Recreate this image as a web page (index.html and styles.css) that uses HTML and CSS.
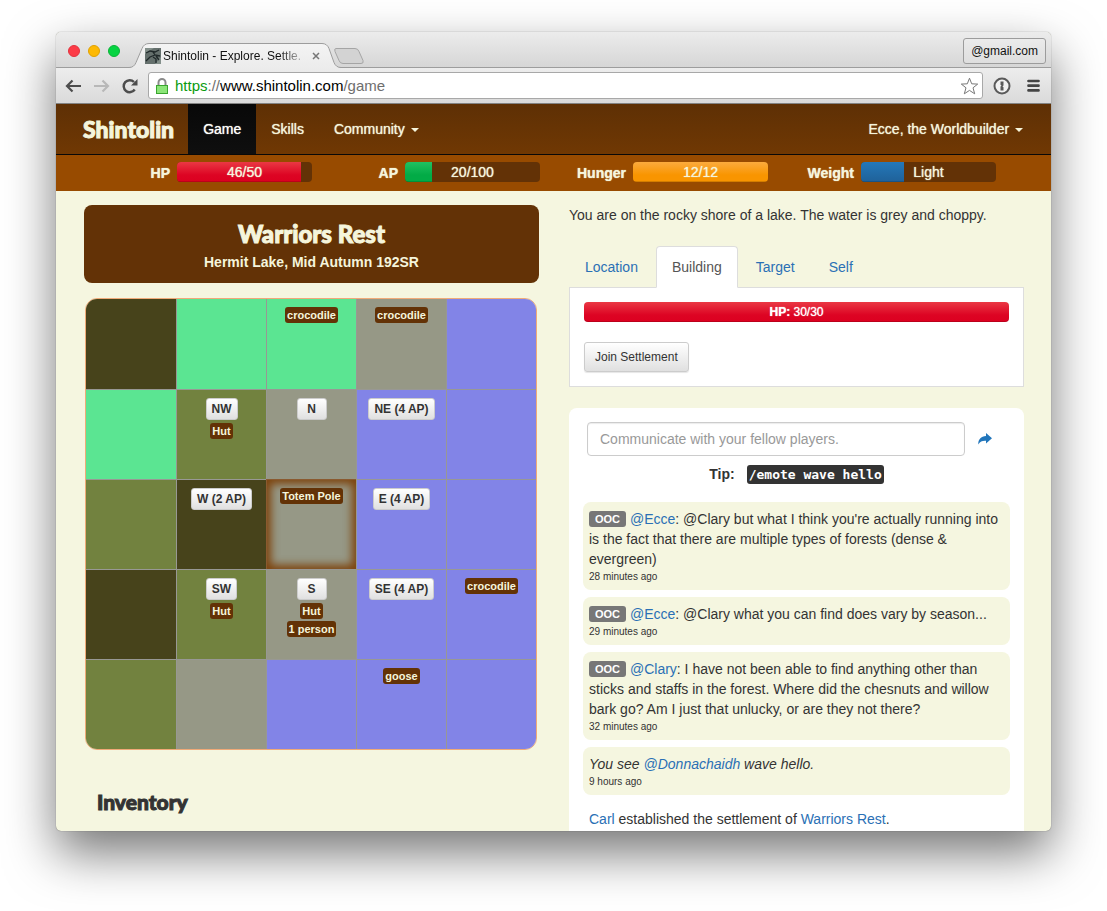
FILE: index.html
```html
<!DOCTYPE html>
<html lang="en">
<head>
<meta charset="utf-8">
<meta name="viewport" content="width=device-width, initial-scale=1">
<title>Shintolin - Explore. Settle.</title>
<link rel="stylesheet" href="styles.css">
</head>
<body>
<div class="window">
  <header class="chrome">
    <div class="titlebar">
      <div class="lights">
        <button class="light light-close" aria-label="Close window"></button>
        <button class="light light-min" aria-label="Minimise window"></button>
        <button class="light light-max" aria-label="Zoom window"></button>
      </div>
      <div class="tab">
        <svg class="tab-shape" viewBox="0 0 244 27" aria-hidden="true">
          <defs><linearGradient id="tabfill" x1="0" y1="0" x2="0" y2="1"><stop offset="0" stop-color="#f4f4f4"/><stop offset="1" stop-color="#ebebeb"/></linearGradient></defs>
          <path d="M207 5.500h19q3 0 4 3l4 9q1 3-2 3h-18q-3 0-4-3l-4-9q-1-3 1-3z" fill="#d3d3d3" stroke="#a5a5a5"/>
          <path d="M0 24.500q5 0 7-5l6-14q2-5 7-5h173q5 0 7 5l5 14q2 5 7 5v2.500H0z" fill="url(#tabfill)"/>
          <path d="M0 24.500q5 0 7-5l6-14q2-5 7-5h173q5 0 7 5l5 14q2 5 7 5" fill="none" stroke="#9d9d9d"/>
        </svg>
        <div class="tab-body">
          <svg class="favicon" viewBox="0 0 16 16" aria-hidden="true">
            <rect width="16" height="16" fill="#65706d"/>
            <path d="M0 0h9L0 6zM10 16l6-7v7z" fill="#84908b"/>
            <path d="M1 5l4-2 5 1 4-2M8 4l2 3 5 1M10 7L5 9l-4 4M8 9l3 2v4M11 8l3 4" fill="none" stroke="#20292a" stroke-width="1.300"/>
          </svg>
          <span class="tab-title">Shintolin - Explore. Settle.</span>
          <button class="tab-close" aria-label="Close tab"><svg viewBox="0 0 8 8" width="8" height="8"><path d="M1 1l6 6M7 1L1 7" stroke="#777" stroke-width="1.500"/></svg></button>
        </div>
      </div>
      <button class="profile">@gmail.com</button>
    </div>
    <div class="toolbar">
      <button class="tool" aria-label="Back"><svg viewBox="0 0 18 16" width="18" height="16"><path d="M8.500 2.500L3 8l5.500 5.500M3.500 8H17" fill="none" stroke="#4d4d4d" stroke-width="2.200"/></svg></button>
      <button class="tool" aria-label="Forward"><svg viewBox="0 0 18 16" width="18" height="16"><path d="M10.500 2.500L16 8l-5.500 5.500M15.500 8H2" fill="none" stroke="#b8b8b8" stroke-width="2.200"/></svg></button>
      <button class="tool" aria-label="Reload"><svg viewBox="0 0 18 16" width="18" height="16"><path d="M14.700 11.500A6 6 0 1 1 14 4" fill="none" stroke="#4d4d4d" stroke-width="2.500"/><path d="M17.500 1v6.500H11z" fill="#4d4d4d"/></svg></button>
      <div class="omnibox">
        <svg class="lock" viewBox="0 0 12 16" width="12" height="16" aria-hidden="true"><path d="M2.500 8V4.500a3.500 3.500 0 0 1 7 0V8" fill="none" stroke="#8b8b8b" stroke-width="2"/><rect x=".5" y="7.500" width="11" height="8" fill="#8be578" stroke="#3aa52f"/></svg>
        <div class="url" role="textbox" aria-label="Address" tabindex="0"><span class="url-scheme">https</span><span class="url-dim">://</span>www.shintolin.com<span class="url-dim">/game</span></div>
        <button class="star" aria-label="Bookmark this page"><svg viewBox="0 0 19 18" width="19" height="18"><path d="M9.500 1.200l2.200 5.600 6 .3-4.700 3.700 1.700 6-5.200-3.400-5.200 3.400 1.700-6L1.300 7.100l6-.3z" fill="#fff" stroke="#777" stroke-linejoin="round"/></svg></button>
      </div>
      <button class="tool tool-key" aria-label="Password manager"><svg viewBox="0 0 18 18" width="18" height="18"><circle cx="9" cy="9" r="7.500" fill="#f2f2f2" stroke="#5a5a5a" stroke-width="2"/><path d="M7.500 4.500h3v4l-1 .8 1 1v3.200h-3v-4l1-.8-1-1z" fill="#5a5a5a"/></svg></button>
      <button class="tool tool-menu" aria-label="Menu"><svg viewBox="0 0 13 13" width="13" height="13"><path d="M1.500 2h10M1.500 6.700h10M1.500 11.400h10" stroke="#444" stroke-width="2.700" stroke-linecap="round"/></svg></button>
    </div>
  </header>

  <nav class="navbar">
    <a class="brand" href="#">Shintolin</a>
    <a class="nav-link nav-active" href="#">Game</a>
    <a class="nav-link" href="#">Skills</a>
    <a class="nav-link" href="#">Community <span class="caret"></span></a>
    <a class="nav-link nav-user" href="#">Ecce, the Worldbuilder <span class="caret"></span></a>
  </nav>

  <section class="stats" aria-label="Character status">
    <div class="stat"><span class="stat-name">HP</span><div class="bar"><div class="fill fill-red" style="width:92%"></div><span class="bar-text">46/50</span></div></div>
    <div class="stat"><span class="stat-name">AP</span><div class="bar"><div class="fill fill-green" style="width:20%"></div><span class="bar-text">20/100</span></div></div>
    <div class="stat"><span class="stat-name">Hunger</span><div class="bar"><div class="fill fill-orange" style="width:100%"></div><span class="bar-text">12/12</span></div></div>
    <div class="stat"><span class="stat-name">Weight</span><div class="bar"><div class="fill fill-blue" style="width:32%"></div><span class="bar-text">Light</span></div></div>
  </section>

  <main class="page">
    <div class="column">
      <div class="place">
        <h1 class="place-name">Warriors Rest</h1>
        <div class="place-info">Hermit Lake, Mid Autumn 192SR</div>
      </div>
      <div class="map">
        <div class="cell dense"></div>
        <div class="cell grass"></div>
        <div class="cell grass"><span class="tag">crocodile</span></div>
        <div class="cell rock"><span class="tag">crocodile</span></div>
        <div class="cell water"></div>

        <div class="cell grass"></div>
        <div class="cell wood"><button class="move">NW</button><span class="tag">Hut</span></div>
        <div class="cell rock"><button class="move">N</button></div>
        <div class="cell water"><button class="move">NE (4 AP)</button></div>
        <div class="cell water"></div>

        <div class="cell wood"></div>
        <div class="cell dense"><button class="move">W (2 AP)</button></div>
        <div class="cell rock here"><span class="tag">Totem Pole</span></div>
        <div class="cell water"><button class="move">E (4 AP)</button></div>
        <div class="cell water"></div>

        <div class="cell dense"></div>
        <div class="cell wood"><button class="move">SW</button><span class="tag">Hut</span></div>
        <div class="cell rock"><button class="move">S</button><span class="tag">Hut</span><span class="tag">1 person</span></div>
        <div class="cell water"><button class="move">SE (4 AP)</button></div>
        <div class="cell water"><span class="tag">crocodile</span></div>

        <div class="cell wood"></div>
        <div class="cell rock"></div>
        <div class="cell water"></div>
        <div class="cell water"><span class="tag">goose</span></div>
        <div class="cell water"></div>
      </div>
      <h2 class="inventory">Inventory</h2>
    </div>

    <div class="column">
      <p class="description">You are on the rocky shore of a lake. The water is grey and choppy.</p>
      <div class="tabs">
        <a class="tab-link" href="#">Location</a>
        <a class="tab-link tab-active" href="#">Building</a>
        <a class="tab-link" href="#">Target</a>
        <a class="tab-link" href="#">Self</a>
      </div>
      <div class="panel">
        <div class="fill fill-red building-hp"><span><b>HP:</b> 30/30</span></div>
        <button class="join">Join Settlement</button>
      </div>
      <div class="chat">
        <form class="talk">
          <input class="talk-input" type="text" placeholder="Communicate with your fellow players." aria-label="Message">
          <button class="send" type="button" aria-label="Send"><svg viewBox="0 0 14 12" width="14" height="12"><path d="M8 0l6 5.300-6 5.300V7.800C4.500 7.600 2 8.500.3 11.500 0 6.500 3 3.300 8 3z" fill="#2276bb"/></svg></button>
        </form>
        <div class="tip"><b>Tip:</b><kbd class="command">/emote wave hello</kbd></div>
        <div class="messages">
          <div class="message"><span class="ooc">OOC</span> <a href="#">@Ecce</a>: @Clary but what I think you're actually running into is the fact that there are multiple types of forests (dense &amp; evergreen)<small class="when">28 minutes ago</small></div>
          <div class="message"><span class="ooc">OOC</span> <a href="#">@Ecce</a>: @Clary what you can find does vary by season...<small class="when">29 minutes ago</small></div>
          <div class="message"><span class="ooc">OOC</span> <a href="#">@Clary</a>: I have not been able to find anything other than sticks and staffs in the forest. Where did the chesnuts and willow bark go? Am I just that unlucky, or are they not there?<small class="when">32 minutes ago</small></div>
          <div class="message"><em>You see <a href="#">@Donnachaidh</a> wave hello.</em><small class="when">9 hours ago</small></div>
          <div class="message message-plain"><a href="#">Carl</a> established the settlement of <a href="#">Warriors Rest</a>.</div>
        </div>
      </div>
    </div>
  </main>
</div>
</body>
</html>
```
FILE: styles.css
```css
* { box-sizing: border-box; }

body {
  margin: 0;
  padding: 32px 56px 80px;
  height: 100vh;
  overflow: hidden;
  background: #fff;
  color: #333;
  font: 14px/20px "Liberation Sans", Arial, sans-serif;
}

a { color: #2a70b5; text-decoration: none; }
button { font: inherit; margin: 0; padding: 0; border: 0; background: none; color: inherit; }
svg { display: block; }
h1, h2, p { margin: 0; }

.window {
  display: flex;
  flex-direction: column;
  height: 100%;
  overflow: hidden;
  border-radius: 5px;
  background: #f5f6e0;
  box-shadow: 0 22px 50px rgba(0, 0, 0, .54), 0 0 1px rgba(0, 0, 0, .6);
}

/* Browser frame */
.chrome { flex: none; color: #111; }
.titlebar {
  display: flex;
  height: 36px;
  padding: 0 5px 0 12px;
  border-bottom: 1px solid #9d9d9d;
  background: linear-gradient(#ececec, #d6d6d6);
}
.lights { display: flex; align-items: center; gap: 8px; height: 38px; }
.light { width: 12px; height: 12px; border-radius: 50%; }
.light-close { background: #fc3b47; border: 1px solid #e2323e; }
.light-min { background: #fdb904; border: 1px solid #e0a100; }
.light-max { background: #06d442; border: 1px solid #0bb338; }
.tab { display: grid; width: 244px; height: 27px; margin: 11px auto 0 9px; }
.tab-shape, .tab-body { grid-area: 1 / 1; }
.tab-shape { width: 244px; height: 27px; }
.tab-body { display: flex; align-items: center; padding: 0 49px 0 16px; height: 26px; }
.favicon { flex: none; width: 16px; height: 16px; margin-right: 2px; }
.tab-title {
  flex: 1;
  min-width: 0;
  overflow: hidden;
  white-space: nowrap;
  font-size: 12px;
  line-height: 16px;
  -webkit-mask-image: linear-gradient(90deg, #000 80%, transparent);
  mask-image: linear-gradient(90deg, #000 80%, transparent);
}
.tab-close { flex: none; padding: 4px; }
.profile {
  height: 26px;
  margin-top: 6px;
  padding: 0 7px;
  border: 1px solid #9c9c9c;
  border-radius: 3px;
  background: linear-gradient(#ebebeb, #dedede);
  font-size: 12px;
}
.toolbar {
  display: flex;
  align-items: center;
  height: 36px;
  padding: 0 11px 0 8px;
  border-bottom: 1px solid #838383;
  background: linear-gradient(#ededed, #dadada);
}
.tool { flex: none; margin-right: 10px; }
.omnibox {
  display: flex;
  flex: 1;
  align-items: center;
  height: 27px;
  padding: 0 3px 0 7px;
  border: 1px solid #a8a8a8;
  border-radius: 3px;
  background: #fff;
}
.url { flex: 1; margin-left: 7px; font-size: 15px; color: #000; }
.url-scheme { color: #0a9b10; }
.url-dim { color: #6e6e6e; }
.tool-key { margin: 0 16px 0 10px; }
.tool-menu { margin-right: 0; }

/* Site navigation */
.navbar {
  display: flex;
  flex: none;
  height: 51px;
  padding: 0 13px 0 12px;
  border-bottom: 1px solid #080808;
  background: linear-gradient(#5e3005, #703803);
}
.brand, .place-name, .inventory { font-family: Lato, "Open Sans", sans-serif; font-weight: 900; }
.brand {
  padding: 0 14px 0 15px;
  font-size: 23px;
  line-height: 50px;
  color: #f5f5dc;
  -webkit-text-stroke: 1px #f5f5dc;
}
.nav-link {
  padding: 0 15px;
  line-height: 50px;
  color: #f5f5dc;
  text-shadow: 0 0 1px #f5f5dc;
}
.nav-active { background: linear-gradient(#080808, #0f0f0f); color: #fff; }
.nav-user { margin-left: auto; }
.caret {
  display: inline-block;
  margin-left: 2px;
  vertical-align: middle;
  border-top: 4px solid;
  border-left: 4px solid transparent;
  border-right: 4px solid transparent;
}

/* Character status */
.stats {
  display: grid;
  flex: none;
  grid-template-columns: repeat(4, 1fr);
  height: 36px;
  padding: 0 55px 0 28px;
  background: #984b00;
  color: #f5f5dc;
}
.stat { display: grid; grid-template-columns: 86fr 135fr; column-gap: 7px; padding-top: 7px; }
.stat-name {
  text-align: right;
  font-weight: bold;
  line-height: 22px;
  text-shadow: 0 0 1px #f5f5dc;
}
.bar {
  display: grid;
  height: 20px;
  overflow: hidden;
  border-radius: 4px;
  background: #633206;
  text-shadow: 0 0 1px #f5f5dc;
}
.bar .fill, .bar-text { grid-area: 1 / 1; }
.bar-text { text-align: center; }
.fill { text-align: center; box-shadow: inset 0 -1px 0 rgba(0, 0, 0, .15); }
.fill-red { background: linear-gradient(#ea3844, #dd0423 65%, #dc0020); }
.fill-green { background: linear-gradient(#21c062, #02ab46 65%); }
.fill-orange { background: linear-gradient(#fbab3e, #f99500 65%); }
.fill-blue { background: linear-gradient(#2478b9, #1f6199); }

/* Page body */
.page {
  display: grid;
  flex: 1;
  grid-template-columns: 1fr 1fr;
  column-gap: 30px;
  align-items: start;
  min-height: 0;
  overflow: hidden;
  padding: 14px 27px 0 28px;
}
.column { min-width: 0; }
.place {
  padding: 12px 10px 10px;
  border-radius: 8px;
  background: #633206;
  color: #f5f5dc;
  text-align: center;
}
.place-name { font-size: 24px; line-height: 34px; -webkit-text-stroke: 1px #f5f5dc; }
.place-info { line-height: 22px; font-weight: bold; }
.map {
  display: grid;
  grid-template-columns: repeat(5, 1fr);
  grid-auto-rows: 1fr;
  max-width: 452px;
  aspect-ratio: 1;
  margin: 15px 0 0 1px;
  overflow: hidden;
  border: 1px solid #f0aa78;
  border-radius: 12px;
}
.cell {
  display: flex;
  flex-direction: column;
  align-items: center;
  gap: 2px;
  min-width: 0;
  padding-top: 8px;
  border: solid #989894;
  border-width: 1px 0 0 1px;
}
.cell:nth-child(5n + 1) { border-left-width: 0; }
.cell:nth-child(-n + 5) { border-top-width: 0; }
.dense { background: #47431b; }
.grass { background: #5be592; }
.wood { background: #72823f; }
.rock { background: #969886; }
.water { background: #8284e7; }
.here { border-color: #8a5a30; box-shadow: inset 0 0 8px 4px #7d430c; }
.move {
  min-width: 30px;
  height: 22px;
  margin-bottom: 1px;
  padding: 0 5px;
  border: 1px solid #ccc;
  border-radius: 3px;
  background: linear-gradient(#fff, #e0e0e0);
  color: #333;
  font-size: 12px;
  font-weight: bold;
  line-height: 20px;
}
.tag {
  height: 16px;
  padding: 0 2px;
  border-radius: 3px;
  background: #633206;
  color: #f5f5dc;
  font-size: 11px;
  font-weight: bold;
  line-height: 16px;
}
.inventory { margin: 37px 0 0 13px; font-size: 21px; line-height: 30px; -webkit-text-stroke: 1px #333; }

.description { margin-bottom: 21px; }
.tabs { display: flex; gap: 2px; margin-bottom: -1px; }
.tab-link {
  padding: 10px 15px;
  border: 1px solid transparent;
  border-radius: 4px 4px 0 0;
}
.tab-active { border-color: #ddd; border-bottom-color: #fff; background: #fff; color: #555; z-index: 1; }
.panel { padding: 14px; border: 1px solid #ddd; background: #fff; }
.building-hp {
  margin-bottom: 20px;
  border-radius: 4px;
  color: #fff;
  font-size: 12px;
  text-shadow: 0 0 1px #fff;
}
.join {
  display: block;
  height: 30px;
  padding: 0 10px;
  border: 1px solid #ccc;
  border-radius: 3px;
  background: linear-gradient(#fff, #e0e0e0);
  box-shadow: 0 1px 1px rgba(0, 0, 0, .1);
  font-size: 12px;
}

.chat { margin-top: 21px; padding: 14px; border-radius: 8px; background: #fff; }
.talk { display: flex; align-items: center; padding: 0 18px 0 4px; }
.talk-input {
  flex: 1;
  min-width: 0;
  height: 34px;
  padding: 0 12px;
  border: 1px solid #ccc;
  border-radius: 4px;
  box-shadow: inset 0 1px 1px rgba(0, 0, 0, .08);
  font: inherit;
}
.talk-input::placeholder { color: #999; opacity: 1; }
.send { margin-left: 13px; }
.tip { display: flex; justify-content: center; align-items: center; gap: 12px; margin-top: 8px; }
.command {
  padding: 0 2px;
  border-radius: 3px;
  background: #333;
  color: #fff;
  font: bold 13px/19px "DejaVu Sans Mono", monospace;
}
.messages { display: flex; flex-direction: column; gap: 7px; margin-top: 18px; }
.message { padding: 7px 6px 6px; border-radius: 8px; background: #f5f6e0; }
.message-plain { background: none; }
.ooc {
  padding: 2px 6px;
  border-radius: 3px;
  background: #777;
  color: #fff;
  font-size: 11px;
  font-weight: bold;
  line-height: 12px;
  vertical-align: 1px;
}
.when { display: block; font-size: 10px; line-height: 15px; }
```
